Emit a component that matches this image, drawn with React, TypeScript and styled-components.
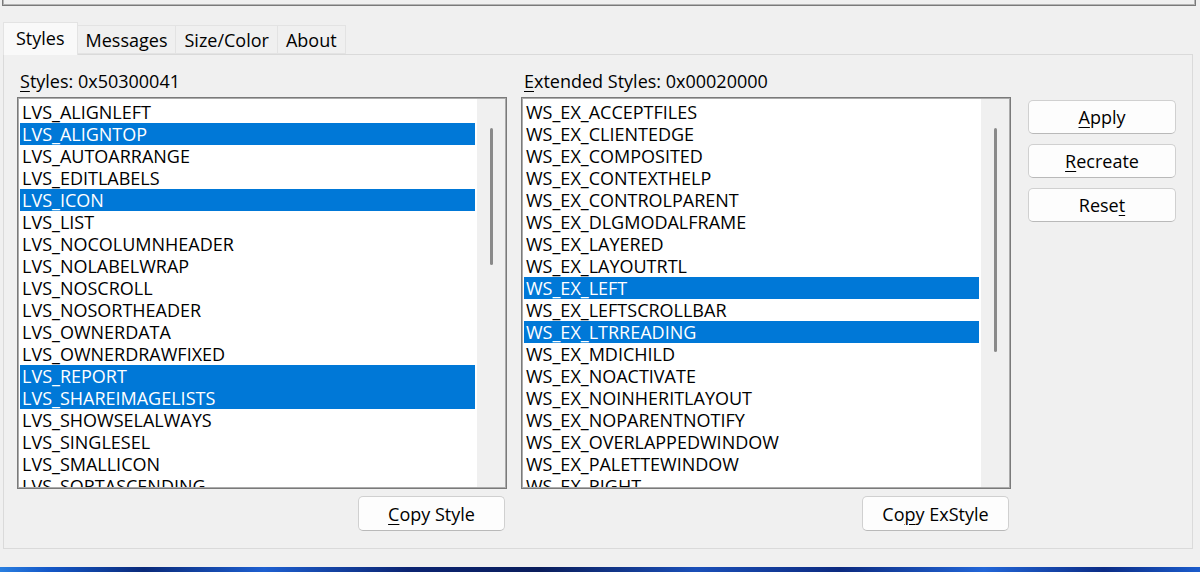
import React from "react";
import styled, { createGlobalStyle } from "styled-components";

const GlobalStyle = createGlobalStyle`
  html, body {
    margin: 0;
    padding: 0;
  }
  body {
    background: #f0f0f0;
    font-family: "Open Sans", "Noto Sans", sans-serif;
    font-size: 18px;
    color: #000;
  }
`;

const Window = styled.div`
  width: 1200px;
  height: 572px;
  display: flex;
  flex-direction: column;
  overflow: hidden;
  background: #f0f0f0;
`;

const TopFrame = styled.div`
  height: 5px;
  margin: 0 4px 0 2px;
  border: 1px solid #7a7a7a;
  border-top: none;
  box-shadow: inset 0 -1px 0 #b4b4b4, inset 1px 0 0 #b4b4b4,
    inset -1px 0 0 #b4b4b4;
`;

const TabBar = styled.div`
  display: flex;
  align-items: flex-end;
  height: 33px;
  margin: 16px 0 0 3px;
  position: relative;
  z-index: 1;
`;

const Tab = styled.div<{ $active?: boolean }>`
  box-sizing: border-box;
  display: flex;
  align-items: center;
  height: ${(p) => (p.$active ? 33 : 29)}px;
  padding: 0 ${(p) => (p.$active ? 12 : 8)}px;
  padding-bottom: ${(p) => (p.$active ? 3 : 0)}px;
  margin-bottom: ${(p) => (p.$active ? 0 : 1)}px;
  margin-left: -1px;
  background: ${(p) => (p.$active ? "#f9f9f9" : "#f0f0f0")};
  border: 1px solid #e3e3e3;
  border-bottom: ${(p) => (p.$active ? "none" : "1px solid #e3e3e3")};
  white-space: nowrap;
  &:first-child {
    margin-left: 0;
  }
`;

const Panel = styled.div`
  box-sizing: border-box;
  height: 495px;
  margin: -1px 7px 0 3px;
  border: 1px solid #dadada;
  padding: 16px 0 0 13px;
  display: grid;
  grid-template-columns: 490px 490px 148px;
  column-gap: 14px;
  align-items: start;
`;

const Column = styled.div`
  display: flex;
  flex-direction: column;
`;

const Label = styled.div`
  height: 20px;
  line-height: 20px;
  padding-left: 3px;
  margin-bottom: 6px;
  white-space: nowrap;
`;

const Accel = styled.span`
  text-decoration: underline;
  text-decoration-thickness: 1px;
  text-underline-offset: 3px;
`;

const ListBox = styled.div`
  box-sizing: border-box;
  height: 392px;
  display: flex;
  background: #fff;
  border: 1px solid #7a7a7a;
  padding: 1px;
  box-shadow: inset 0 0 0 1px #ababab;
`;

const Items = styled.div`
  flex: 1;
  overflow: hidden;
  padding: 2px 2px 0 1px;
`;

const Row = styled.div<{ $selected?: boolean }>`
  height: 22px;
  line-height: 22px;
  padding-left: 2px;
  white-space: nowrap;
  background: ${(p) => (p.$selected ? "#0078d7" : "transparent")};
  color: ${(p) => (p.$selected ? "#fff" : "#000")};
`;

const ScrollTrack = styled.div`
  box-sizing: border-box;
  width: 28px;
  background: #f0f0f0;
  display: flex;
  justify-content: center;
  padding-top: 29px;
`;

const Thumb = styled.div<{ $size: number }>`
  width: 3px;
  height: ${(p) => p.$size}px;
  background: #8a8a8a;
  border-radius: 2px;
`;

const Button = styled.button<{ $wide?: boolean }>`
  box-sizing: border-box;
  width: ${(p) => (p.$wide ? 147 : 148)}px;
  height: ${(p) => (p.$wide ? 35 : 34)}px;
  padding: 0;
  font: inherit;
  color: #000;
  background: #fdfdfd;
  border: 1px solid #d0d0d0;
  border-bottom-color: #b9b9b9;
  border-radius: 5px;
`;

const CopyButton = styled(Button)`
  margin-top: 7px;
  margin-right: 2px;
  align-self: flex-end;
`;

const ButtonStack = styled.div`
  display: flex;
  flex-direction: column;
  gap: 10px;
  padding-top: 29px;
  margin-left: 3px;
`;

const Spacer = styled.div`
  flex: 1;
`;

const Wallpaper = styled.div`
  height: 5px;
  background: linear-gradient(
    90deg,
    #2a7fe0 0%,
    #1458c8 4%,
    #0a2a7a 12%,
    #1d5fd0 22%,
    #0b2472 34%,
    #0a1d5c 45%,
    #1a4fb8 58%,
    #0c2a80 70%,
    #2266d8 82%,
    #0b2c86 92%,
    #1b5ccc 100%
  );
`;

// only the rows that fit in the list (the last one is cut by the frame)
const lvsStyles = [
  "LVS_ALIGNLEFT",
  "LVS_ALIGNTOP",
  "LVS_AUTOARRANGE",
  "LVS_EDITLABELS",
  "LVS_ICON",
  "LVS_LIST",
  "LVS_NOCOLUMNHEADER",
  "LVS_NOLABELWRAP",
  "LVS_NOSCROLL",
  "LVS_NOSORTHEADER",
  "LVS_OWNERDATA",
  "LVS_OWNERDRAWFIXED",
  "LVS_REPORT",
  "LVS_SHAREIMAGELISTS",
  "LVS_SHOWSELALWAYS",
  "LVS_SINGLESEL",
  "LVS_SMALLICON",
  "LVS_SORTASCENDING",
];
const lvsSelected = ["LVS_ALIGNTOP", "LVS_ICON", "LVS_REPORT", "LVS_SHAREIMAGELISTS"];

const exStyles = [
  "WS_EX_ACCEPTFILES",
  "WS_EX_CLIENTEDGE",
  "WS_EX_COMPOSITED",
  "WS_EX_CONTEXTHELP",
  "WS_EX_CONTROLPARENT",
  "WS_EX_DLGMODALFRAME",
  "WS_EX_LAYERED",
  "WS_EX_LAYOUTRTL",
  "WS_EX_LEFT",
  "WS_EX_LEFTSCROLLBAR",
  "WS_EX_LTRREADING",
  "WS_EX_MDICHILD",
  "WS_EX_NOACTIVATE",
  "WS_EX_NOINHERITLAYOUT",
  "WS_EX_NOPARENTNOTIFY",
  "WS_EX_OVERLAPPEDWINDOW",
  "WS_EX_PALETTEWINDOW",
  "WS_EX_RIGHT",
];
const exSelected = ["WS_EX_LEFT", "WS_EX_LTRREADING"];

type StyleListProps = {
  items: string[];
  selected: string[];
  thumb: number;
};

const StyleList = ({ items, selected, thumb }: StyleListProps) => (
  <ListBox>
    <Items>
      {items.map((name) => (
        <Row key={name} $selected={selected.includes(name)}>
          {name}
        </Row>
      ))}
    </Items>
    <ScrollTrack>
      <Thumb $size={thumb} />
    </ScrollTrack>
  </ListBox>
);

const App = () => {
  return (
    <Window>
      <GlobalStyle />
      <TopFrame />

      <TabBar>
        <Tab $active>Styles</Tab>
        <Tab>Messages</Tab>
        <Tab>Size/Color</Tab>
        <Tab>About</Tab>
      </TabBar>

      <Panel>
        <Column>
          <Label>
            <Accel>S</Accel>tyles: 0x50300041
          </Label>
          <StyleList items={lvsStyles} selected={lvsSelected} thumb={137} />
          <CopyButton $wide>
            <Accel>C</Accel>opy Style
          </CopyButton>
        </Column>

        <Column>
          <Label>
            <Accel>E</Accel>xtended Styles: 0x00020000
          </Label>
          <StyleList items={exStyles} selected={exSelected} thumb={224} />
          <CopyButton $wide>
            Co<Accel>p</Accel>y ExStyle
          </CopyButton>
        </Column>

        <ButtonStack>
          <Button>
            <Accel>A</Accel>pply
          </Button>
          <Button>
            <Accel>R</Accel>ecreate
          </Button>
          <Button>
            Rese<Accel>t</Accel>
          </Button>
        </ButtonStack>
      </Panel>

      <Spacer />
      <Wallpaper />
    </Window>
  );
};

export default App;
